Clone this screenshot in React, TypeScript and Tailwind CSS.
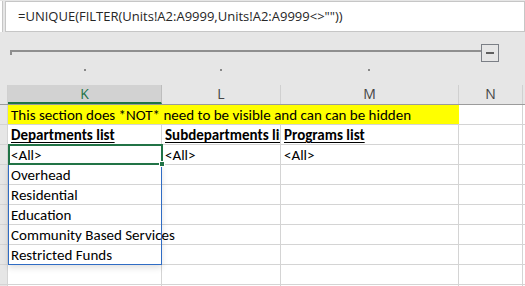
import React from "react";

const cellFont = { fontFamily: "Carlito, Calibri, Lato, 'Open Sans', sans-serif" };

function Row({ children }: { children?: React.ReactNode }) {
  return <div className="flex h-[20px] relative">{children}</div>;
}

function Cell({
  w,
  children,
  className = "",
  clip = true,
}: {
  w: number;
  children?: React.ReactNode;
  className?: string;
  clip?: boolean;
}) {
  return (
    <div
      className={`h-[20px] shrink-0 border-r border-b border-[#d4d4d4] pl-[3px] pt-[1px] text-[15px] leading-[19px] text-black whitespace-nowrap ${clip ? "overflow-hidden" : "overflow-visible"} ${className}`}
      style={{ width: w, ...cellFont }}
    >
      {children}
    </div>
  );
}

export default function App() {
  const list = ["Overhead", "Residential", "Education", "Community Based Services", "Restricted Funds"];
  return (
    <div className="w-[525px] h-[286px] bg-[#e6e6e6] overflow-hidden relative">
      {/* formula bar */}
      <div className="flex h-[33px] pt-[1px]">
        <div className="w-[3px] h-[31px] bg-white border-r border-[#c6c6c6]" />
        <div className="w-[2px]" />
        <div
          className="flex-1 h-[31px] bg-white border border-[#c6c6c6] pl-[12px] text-[13px] leading-[29px] text-[#262626]"
          style={{ fontFamily: "'Segoe UI', 'Open Sans', 'Noto Sans', sans-serif" }}
        >
          =UNIQUE(FILTER(Units!A2:A9999,Units!A2:A9999&lt;&gt;""))
        </div>
      </div>
      {/* outline slider area */}
      <div className="h-[52px] relative">
        <div className="absolute left-[10px] top-[17px] w-[472px] h-[2px] bg-[#8f8f8f]" />
        <div className="absolute left-[10px] top-[17px] w-[2px] h-[5px] bg-[#8f8f8f]" />
        <div className="absolute left-[481px] top-[11px] w-[18px] h-[18px] border border-[#7b7f86] flex items-center justify-center">
          <div className="w-[8px] h-[2px] bg-[#5f5f5f]" />
        </div>
        <div className="absolute left-[84px] top-[36px] w-[2px] h-[2px] bg-[#888]" />
        <div className="absolute left-[220px] top-[36px] w-[2px] h-[2px] bg-[#888]" />
        <div className="absolute left-[368px] top-[36px] w-[2px] h-[2px] bg-[#888]" />
      </div>
      {/* column headers */}
      <div
        className="flex h-[20px] border-b border-[#9b9b9b]"
        style={{ fontFamily: "'Segoe UI', 'Open Sans', 'Noto Sans', sans-serif" }}
      >
        <div className="w-[8px] shrink-0 bg-[#e6e6e6] border-r border-[#d0d0d0]" />
        <div className="w-[154px] shrink-0 bg-[#d2d2d2] border-r border-[#bdbdbd] border-b-2 border-b-[#217346] text-center text-[14px] leading-[18px] text-[#217346]">
          K
        </div>
        <div className="w-[119px] shrink-0 border-r border-[#d0d0d0] text-center text-[14px] leading-[18px] text-[#444]">L</div>
        <div className="w-[178px] shrink-0 border-r border-[#d0d0d0] text-center text-[14px] leading-[18px] text-[#444]">M</div>
        <div className="w-[64px] shrink-0 border-r border-[#d0d0d0] text-center text-[14px] leading-[18px] text-[#444]">N</div>
      </div>
      {/* grid */}
      <div className="bg-white">
        <Row>
          <Cell w={8} className="bg-[#e6e6e6] pl-0" />
          <div
            className="h-[20px] shrink-0 bg-[#ffff00] border-b border-[#d4d4d4] pl-[3px] pt-[1px] text-[15px] leading-[19px] whitespace-nowrap"
            style={{ width: 451, ...cellFont }}
          >
            This section does *NOT* need to be visible and can can be hidden
          </div>
          <Cell w={64} />
          <Cell w={2} className="pl-0 border-r-0" />
        </Row>
        <Row>
          <Cell w={8} className="bg-[#e6e6e6] pl-0" />
          <Cell w={154} className="font-bold">
            <span className="underline underline-offset-2">Departments list</span>
          </Cell>
          <Cell w={119} className="font-bold">
            <span className="underline underline-offset-2">Subdepartments list</span>
          </Cell>
          <Cell w={178} className="font-bold">
            <span className="underline underline-offset-2">Programs list</span>
          </Cell>
          <Cell w={64} />
          <Cell w={2} className="pl-0 border-r-0" />
        </Row>
        <Row>
          <Cell w={8} className="bg-[#e6e6e6] pl-0" />
          <Cell w={154}>&lt;All&gt;</Cell>
          <Cell w={119}>&lt;All&gt;</Cell>
          <Cell w={178}>&lt;All&gt;</Cell>
          <Cell w={64} />
          <Cell w={2} className="pl-0 border-r-0" />
        </Row>
        {list.map((t) => (
          <Row key={t}>
            <Cell w={8} className="bg-[#e6e6e6] pl-0" />
            <Cell w={154} clip={false} className="relative z-10">
              {t}
            </Cell>
            <Cell w={119} />
            <Cell w={178} />
            <Cell w={64} />
            <Cell w={2} className="pl-0 border-r-0" />
          </Row>
        ))}
        {[0, 1].map((i) => (
          <Row key={"e" + i}>
            <Cell w={8} className="bg-[#e6e6e6] pl-0" />
            <Cell w={154} />
            <Cell w={119} />
            <Cell w={178} />
            <Cell w={64} />
            <Cell w={2} className="pl-0 border-r-0" />
          </Row>
        ))}
      </div>
      {/* spill range border */}
      <div className="absolute left-[8px] top-[164px] w-[154px] h-[101px] border border-[#2f6cc4] shadow-[0_3px_6px_rgba(0,0,0,0.12)] pointer-events-none z-20" />
      {/* active cell */}
      <div className="absolute left-[8px] top-[144px] w-[155px] h-[21px] border-2 border-[#217346] z-30" />
      <div className="absolute left-[159px] top-[161px] w-[6px] h-[6px] bg-[#217346] border border-white z-30" />
    </div>
  );
}
